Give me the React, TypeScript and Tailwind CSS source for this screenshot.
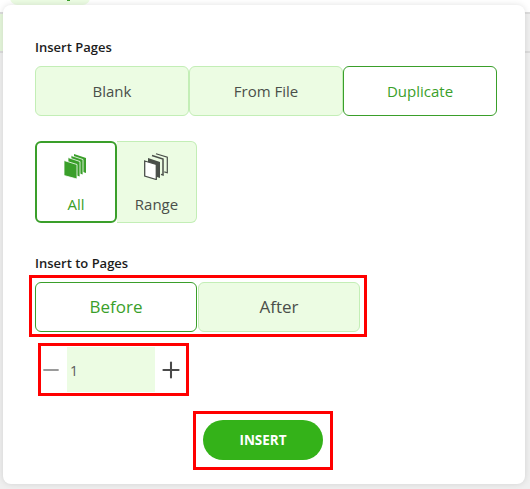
import { Minus, Plus } from "lucide-react";

const FONT = "font-['Open_Sans','Noto_Sans',sans-serif]";

const SEG_IDLE = "bg-[#ecfce3] border-[#c3eeb6] text-[#4a4f4a]";
const SEG_ACTIVE = "bg-white border-[#3a9f2a] text-[#3a9f2a]";

function Seg({ label, active, w, big }: { label: string; active?: boolean; w: string; big?: boolean }) {
  return (
    <button className={`${w} h-[50px] rounded-[6px] border ${big ? "text-[17px]" : "text-[15px]"} ${active ? SEG_ACTIVE : SEG_IDLE}`}>
      {label}
    </button>
  );
}

// Stack of sheets: solid in green for All, outlined for Range
function AllIcon() {
  return (
    <svg width="22" height="25" viewBox="0 0 22 25" className="-ml-[2px]">
      <path d="M10 0l12 4v15L10 15z" fill="#3a9f2a" />
      <path d="M7 1.500l12 4v15.500L7 17z" fill="#3a9f2a" stroke="#fff" strokeWidth=".8" />
      <path d="M4 3.500l12 4v15.500L4 19z" fill="#3a9f2a" stroke="#fff" strokeWidth=".8" />
      <path d="M0 6.500l13 4V25L0 21.500z" fill="#3a9f2a" stroke="#fff" strokeWidth=".8" />
    </svg>
  );
}

function RangeIcon() {
  return (
    <svg width="24" height="27" viewBox="0 0 24 27" className="-ml-[1px]">
      <path d="M12 .8l11.300 3.500v15.500l-3-.9" fill="none" stroke="#4a4f4a" strokeWidth="1.200" />
      <path d="M8 2.500l11 3.500v16l-2-.6" fill="#ecfce3" stroke="#4a4f4a" strokeWidth="1.500" />
      <path d="M4 5l12 4v16l-12-4z" fill="#4a4f4a" />
      <path d="M.7 8l11.600 3.500v15L.7 23z" fill="#fff" stroke="#4a4f4a" strokeWidth="1.300" />
    </svg>
  );
}

export default function App() {
  return (
    <div className={`${FONT} relative w-[530px] h-[489px] overflow-hidden bg-[#efefef]`}>
      {/* page behind the dialog */}
      <div className="absolute inset-x-0 top-0 h-[12px] bg-white" />
      <div className="absolute left-[10px] -top-[10px] w-[80px] h-[15px] rounded-full bg-[#ecfce3]" />
      <div className="absolute left-[67px] top-0 w-[3px] h-px bg-[#3a9f2a]" />
      <div className="absolute left-0 top-[12px] w-full h-[41px] bg-[#efefef] border-y-2 border-[#dcdcdc]" />
      <div className="absolute left-0 top-[14px] w-[3px] h-[37px] bg-[#e6f7dc]" />

      <div className="absolute left-[3px] top-[5px] w-[522px] h-[479px] rounded-[8px] bg-white shadow-[0_0_6px_rgba(0,0,0,0.12)] pl-[32px] pt-[32px] flex flex-col items-start">
        <p className="text-[13px] leading-[20px] font-semibold text-[#1c1c1c]">Insert Pages</p>
        <div className="mt-[9px] flex">
          <Seg label="Blank" w="w-[154px]" />
          <Seg label="From File" w="w-[154px]" />
          <Seg label="Duplicate" w="w-[154px]" active />
        </div>

        <div className="mt-[25px] flex">
          <button className="w-[82px] h-[82px] rounded-[6px] border-2 border-[#3a9f2a] bg-white text-[#3a9f2a] text-[15px] flex flex-col items-center pt-[11px]">
            <AllIcon />
            <span className="mt-[15px] leading-[20px]">All</span>
          </button>
          <button className="w-[80px] h-[82px] rounded-r-[6px] border border-l-0 border-[#c3eeb6] bg-[#ecfce3] text-[#4a4f4a] text-[15px] flex flex-col items-center pt-[11px]">
            <RangeIcon />
            <span className="mt-[14px] leading-[20px]">Range</span>
          </button>
        </div>

        <p className="mt-[30px] text-[13px] leading-[20px] font-semibold text-[#1c1c1c]">Insert to Pages</p>
        <div className="mt-[2px] -ml-[6px] border-[3px] border-[#ff0000] pl-[3px] pr-[4px] pt-[4px] pb-[2px] flex gap-px">
          <Seg label="Before" w="w-[162px]" active big />
          <Seg label="After" w="w-[162px]" big />
        </div>

        <div className="mt-[6px] ml-[3px] w-[151px] h-[53px] border-[3px] border-[#ff0000] flex items-center">
          <Minus size={24} strokeWidth={1.800} className="-ml-[2px] text-[#9a9a9a]" />
          <div className="ml-[4px] w-[88px] h-[45px] bg-[#ecfce3] text-[14px] text-[#5a5a5a] flex items-center pl-[3px] pt-[1px]">1</div>
          <Plus size={26} strokeWidth={1.900} className="ml-[3px] text-[#4a4a4a]" />
        </div>

        <div className="mt-[15px] ml-[158px] w-[140px] h-[59px] border-[3px] border-[#ff0000] flex justify-center pt-[6px]">
          <button className="w-[120px] h-[40px] rounded-full bg-[#34b219] text-white text-[13.500px] font-bold">INSERT</button>
        </div>
      </div>
    </div>
  );
}
